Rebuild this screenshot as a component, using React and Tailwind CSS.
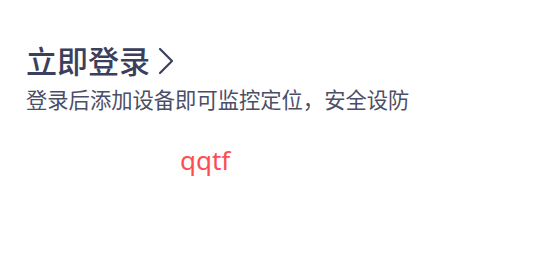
export default function App() {
  return (
    <div className="w-[550px] h-[275px] bg-white overflow-hidden font-['Noto_Sans','Noto_Sans_CJK_SC',sans-serif]">
      <div className="pl-[26px] pt-[41px]">
        <div className="flex items-center gap-[8px] text-[#3b3f5c]">
          <span className="text-[31px] leading-[40px] font-medium">立即登录</span>
          <svg width="16" height="28" viewBox="0 0 16 28" fill="none">
            <path d="M2 2 L14 14 L2 26" stroke="#3b3f5c" strokeWidth="2.2" strokeLinecap="round" strokeLinejoin="round" />
          </svg>
        </div>
        <p className="mt-[5px] text-[21.3px] leading-[28px] text-[#4a4e66]">登录后添加设备即可监控定位，安全设防</p>
      </div>
      <div className="mt-[29px] pl-[180px] text-[26px] leading-[34px] text-[#ff4d4f]">qqtf</div>
    </div>
  );
}
